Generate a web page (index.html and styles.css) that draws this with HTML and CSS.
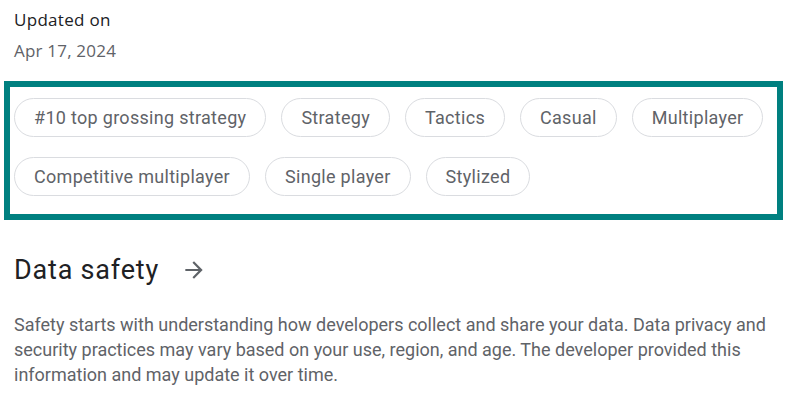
FILE: index.html
```html
<!DOCTYPE html>
<html>
<head>
    <meta charset="utf-8">
    <title>App details</title>
    <link rel="stylesheet" href="styles.css">
</head>
<body>
    <div class="meta">
        <div class="meta-label">Updated on</div>
        <div class="meta-value">Apr 17, 2024</div>
    </div>

    <div class="tags-box">
        <div class="tag-row">
            <a class="chip" href="#">#10 top grossing strategy</a>
            <a class="chip" href="#">Strategy</a>
            <a class="chip" href="#">Tactics</a>
            <a class="chip" href="#">Casual</a>
            <a class="chip" href="#">Multiplayer</a>
        </div>
        <div class="tag-row">
            <a class="chip" href="#">Competitive multiplayer</a>
            <a class="chip" href="#">Single player</a>
            <a class="chip" href="#">Stylized</a>
        </div>
    </div>

    <div class="section">
        <h2 class="section-title">Data safety
            <svg class="arrow" width="26" height="26" viewBox="0 0 24 24">
                <path d="M12 4l-1.41 1.41L16.17 11H4v2h12.17l-5.58 5.59L12 20l8-8z" fill="#5f6368"/>
            </svg>
        </h2>
        <p class="section-text">Safety starts with understanding how developers collect and share your data. Data privacy and security practices may vary based on your use, region, and age. The developer provided this information and may update it over time.</p>
    </div>
</body>
</html>
```

FILE: styles.css
```css
body {
    margin: 0;
    padding: 10px 4px 0 4px;
    background: #fff;
    font-family: Roboto, "Liberation Sans", sans-serif;
    color: #202124;
}
.meta {
    padding-left: 10px;
    font-family: "Open Sans", Roboto, sans-serif;
}
.meta-label {
    font-size: 17px;
    font-weight: 500;
    line-height: 20px;
    letter-spacing: 0.3px;
    color: #202124;
}
.meta-value {
    margin-top: 10px;
    font-size: 17px;
    line-height: 22px;
    letter-spacing: 0.2px;
    color: #5f6368;
}
.tags-box {
    margin-top: 19px;
    border: 6px solid #008080;
    box-sizing: border-box;
    width: 779px;
    height: 139px;
    padding: 11px 0 11px 4px;
    display: flex;
    flex-direction: column;
    gap: 20px;
}
.tag-row {
    display: flex;
    gap: 15px;
    white-space: nowrap;
}
.chip {
    display: inline-flex;
    align-items: center;
    height: 39px;
    box-sizing: border-box;
    padding: 0 19px;
    border: 1px solid #dadce0;
    border-radius: 20px;
    font-size: 18px;
    letter-spacing: 0.3px;
    color: #5f6368;
    text-decoration: none;
}
.section {
    padding-left: 10px;
}
.section-title {
    margin: 34px 0 0 0;
    display: flex;
    align-items: center;
    font-size: 27px;
    font-weight: 400;
    line-height: 32px;
    letter-spacing: 0.8px;
    color: #202124;
}
.arrow {
    margin-left: 22px;
}
.section-text {
    margin: 26px 0 0 0;
    font-size: 18px;
    line-height: 25px;
    color: #5f6368;
    max-width: 772px;
}
```
